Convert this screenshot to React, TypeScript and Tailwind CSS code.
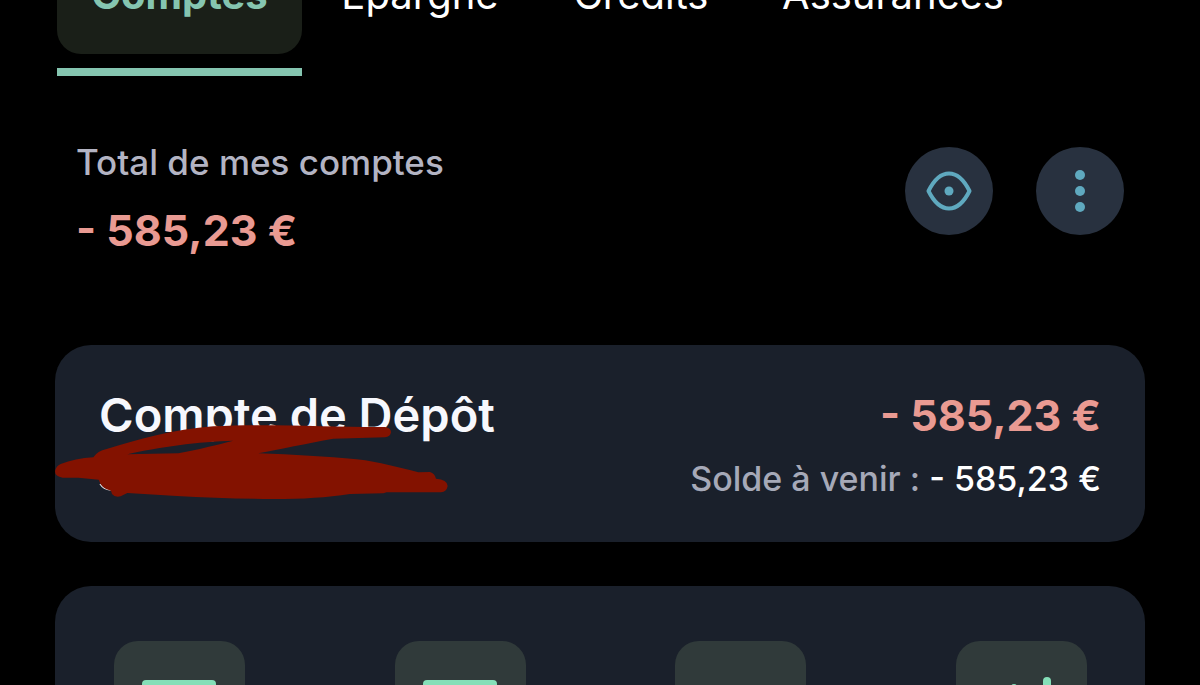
import type { ReactNode } from "react";

type TabT = {
  label: string;
  active?: boolean;
  className: string;
};

type ActionT = {
  name: string;
  icon: ReactNode;
};

const tabs: TabT[] = [
  { label: "Comptes", active: true, className: "w-[245px]" },
  { label: "Épargne", className: "w-[236px]" },
  { label: "Crédits", className: "w-[206px]" },
  { label: "Assurances", className: "w-[298px]" },
];

const actions: ActionT[] = [
  { name: "Virement", icon: <CardIcon /> },
  { name: "Carte", icon: <CardIcon /> },
  { name: "RIB", icon: null },
  { name: "Budget", icon: <ChartIcon /> },
];

export default function App() {
  return (
    <div className="h-screen overflow-hidden bg-black font-['Inter',sans-serif] text-white">
      <Tabs />
      <main className="px-[55px]">
        <Total amount="- 585,23 €" />
        <AccountCard
          name="Compte de Dépôt"
          amount="- 585,23 €"
          upcoming="- 585,23 €"
        />
        <Actions />
      </main>
    </div>
  );
}

function Tabs() {
  return (
    <nav className="-mt-[60px] flex px-[57px]">
      {tabs.map((tab) => (
        <div key={tab.label} className={`shrink-0 ${tab.className}`}>
          <button
            className={
              tab.active
                ? "h-[114px] w-full rounded-3xl bg-[#1a1f18] pb-1 text-[40px] font-bold text-[#85c5b0]"
                : "h-[114px] w-full pb-1 text-[40px] font-normal"
            }>
            {tab.label}
          </button>
          {tab.active && <div className="mt-3.5 h-2 bg-[#85c5b0]" />}
        </div>
      ))}
    </nav>
  );
}

function Total({ amount }: { amount: string }) {
  return (
    <section className="flex items-start justify-between px-[21px] pt-[66px]">
      <div>
        <h1 className="text-[35px] leading-10 font-medium text-[#b3b4c3]">
          Total de mes comptes
        </h1>
        <p className="mt-5 text-[43px] leading-[56px] font-bold text-[#e99a92]">
          {amount}
        </p>
      </div>
      <div className="flex gap-[43px] pt-[5px]">
        <button
          aria-label="Masquer les montants"
          className="flex size-[88px] items-center justify-center rounded-full bg-[#28313f] text-[#5fa9bf]">
          <EyeIcon />
        </button>
        <button
          aria-label="Plus d'options"
          className="flex size-[88px] items-center justify-center rounded-full bg-[#28313f] text-[#5fa9bf]">
          <DotsIcon />
        </button>
      </div>
    </section>
  );
}

type AccountCardPropsT = {
  name: string;
  amount: string;
  upcoming: string;
};

function AccountCard({ name, amount, upcoming }: AccountCardPropsT) {
  return (
    <section className="relative mt-[87px] flex h-[197px] items-start justify-between rounded-[36px] bg-[#1a202b] px-11 pt-[42px]">
      <h2 className="text-[47px] leading-[56px] font-semibold text-[#f7f8fd]">
        {name}
      </h2>
      <div className="text-right">
        <p className="text-[43px] leading-[56px] font-bold text-[#e99a92]">
          {amount}
        </p>
        <p className="mt-4 text-[34px] leading-10 font-medium text-[#a6a9b8]">
          Solde à venir : <span className="text-white">{upcoming}</span>
        </p>
      </div>
      <Scribble />
    </section>
  );
}

function Actions() {
  return (
    <section className="mt-11 flex h-[240px] justify-between rounded-[36px] bg-[#1a202b] pt-[55px] pr-[58px] pl-[59px]">
      {actions.map((action) => (
        <button
          key={action.name}
          aria-label={action.name}
          className="flex size-[131px] items-start justify-center rounded-3xl bg-[#303a3a] pt-9 text-[#85dfb8]">
          {action.icon}
        </button>
      ))}
    </section>
  );
}

/* Marker strokes over the account number */
function Scribble() {
  return (
    <svg
      aria-hidden="true"
      className="pointer-events-none absolute top-0 left-0 h-[160px] w-[400px]"
      viewBox="45 15 1200 480">
      <path
        d="M180 432 Q190 448 212 450"
        fill="none"
        stroke="#e6e7ee"
        strokeWidth="4"
      />
      <path
        fill="#831200"
        fillRule="evenodd"
        d="M62 372 Q105 355 160 352 Q172 333 200 327 C290 300 400 268 520 259 C680 250 880 262 1035 261 Q1053 264 1053 277 Q1051 290 1035 292 L880 296 C800 310 720 328 655 340 C760 344 860 350 950 358 C1020 366 1075 382 1135 397 L1170 396 Q1184 400 1188 416 Q1222 418 1223 438 Q1220 455 1203 457 L1040 457 L1030 460 L930 462 C860 473 790 477 700 477 C600 476 500 474 410 468 L262 459 L242 469 Q226 474 216 462 L213 452 Q184 446 176 419 L115 413 L68 413 Q45 410 45 394 Q48 378 62 372 Z M262 343 L415 340 C480 327 530 315 580 302 C480 304 350 322 262 343 Z"
      />
    </svg>
  );
}

function EyeIcon() {
  return (
    <svg width="48" height="44" viewBox="0 0 48 44" fill="none">
      <path
        d="M3.5 22 C9 11 15 4.5 24 4.5 C33 4.5 39 11 44.5 22 C39 33 33 39.5 24 39.5 C15 39.5 9 33 3.5 22 Z"
        stroke="currentColor"
        strokeWidth="4"
        strokeLinejoin="round"
      />
      <circle cx="24" cy="22" r="4.5" fill="currentColor" />
    </svg>
  );
}

function DotsIcon() {
  return (
    <svg width="12" height="44" viewBox="0 0 12 44" fill="currentColor">
      <circle cx="6" cy="6" r="5" />
      <circle cx="6" cy="22" r="5" />
      <circle cx="6" cy="38" r="5" />
    </svg>
  );
}

function CardIcon() {
  return (
    <svg width="75" height="56" viewBox="0 0 75 56" fill="currentColor">
      <rect x="0" y="3" width="74" height="50" rx="4" />
    </svg>
  );
}

function ChartIcon() {
  return (
    <svg
      width="75"
      height="60"
      viewBox="0 0 75 60"
      fill="none"
      stroke="currentColor"
      strokeLinecap="round">
      <path d="M63 4 V52" strokeWidth="8" />
      <path d="M30 10 V52" strokeWidth="6" />
    </svg>
  );
}
